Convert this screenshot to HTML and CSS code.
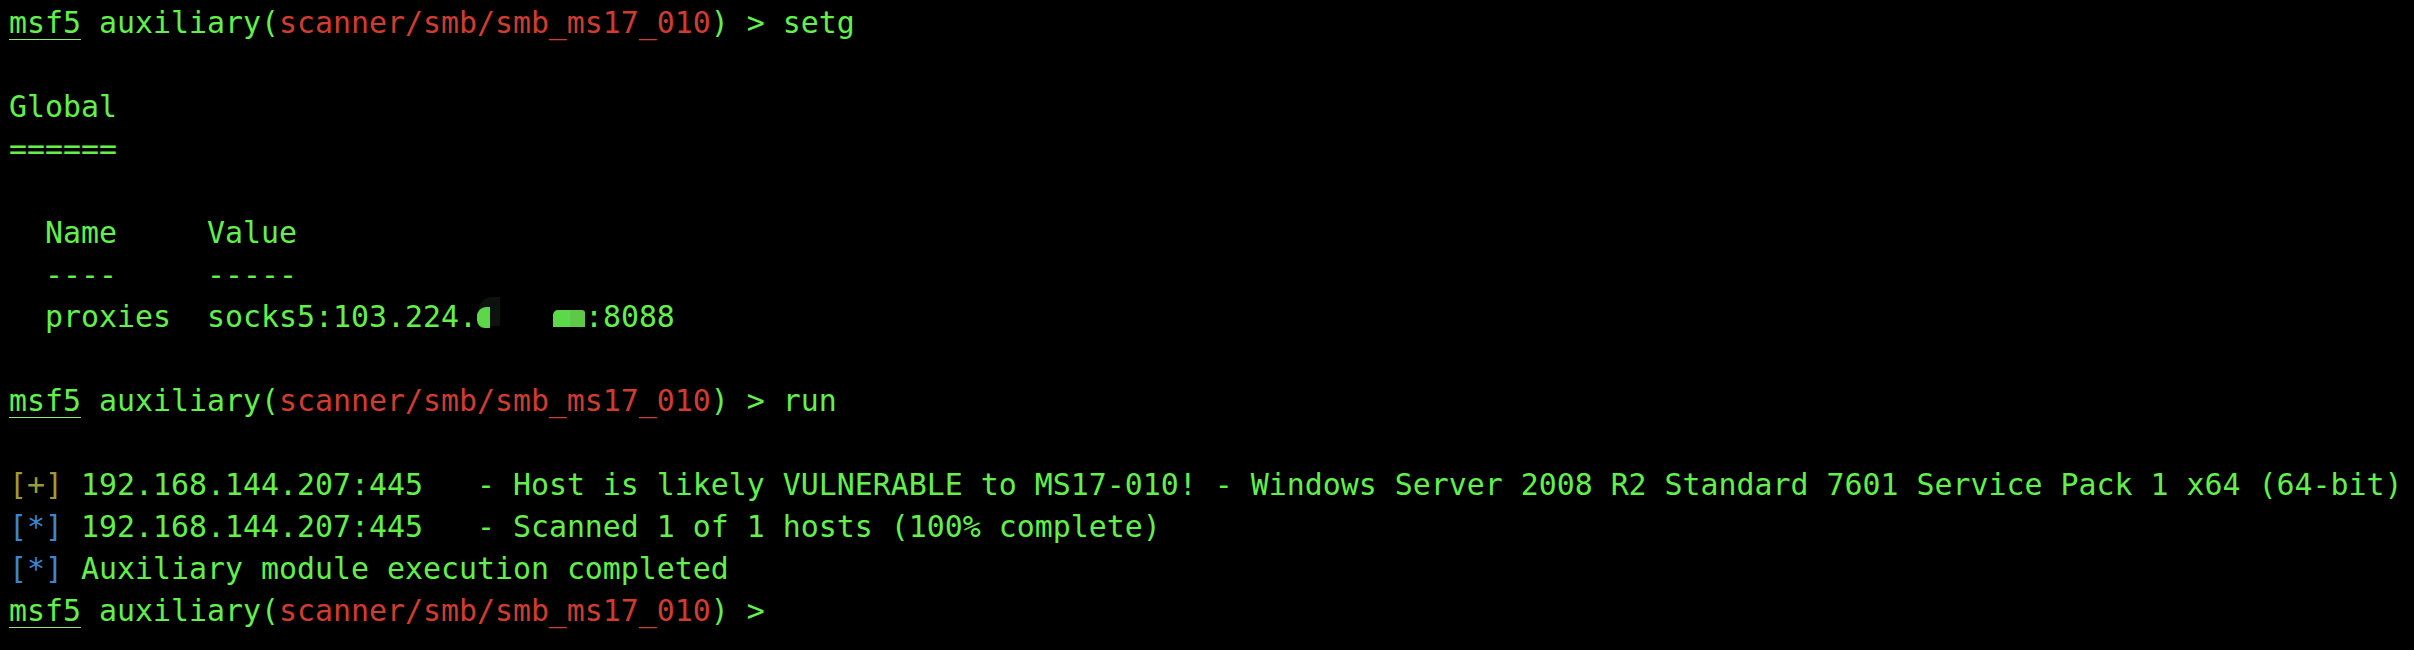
FILE: index.html
```html
<!DOCTYPE html>
<html>
<head>
<meta charset="utf-8">
<link rel="stylesheet" href="styles.css">
</head>
<body>
<div class="term">
  <div class="ln"><span class="u">msf5</span> auxiliary(<span class="r">scanner/smb/smb_ms17_010</span>) &gt; setg</div>
  <div class="ln"></div>
  <div class="ln">Global</div>
  <div class="ln">======</div>
  <div class="ln"></div>
  <div class="ln">  Name     Value</div>
  <div class="ln">  ----     -----</div>
  <div class="ln">  proxies  socks5:103.224.<span class="redact"><span class="blob"></span><span class="gap"></span><span class="bar"><span class="bar-a"></span><span class="bar-b"></span></span></span>:8088</div>
  <div class="ln"></div>
  <div class="ln"><span class="u">msf5</span> auxiliary(<span class="r">scanner/smb/smb_ms17_010</span>) &gt; run</div>
  <div class="ln"></div>
  <div class="ln"><span class="y">[+]</span> 192.168.144.207:445   - Host is likely VULNERABLE to MS17-010! - Windows Server 2008 R2 Standard 7601 Service Pack 1 x64 (64-bit)</div>
  <div class="ln"><span class="b">[*]</span> 192.168.144.207:445   - Scanned 1 of 1 hosts (100% complete)</div>
  <div class="ln"><span class="b">[*]</span> Auxiliary module execution completed</div>
  <div class="ln"><span class="u">msf5</span> auxiliary(<span class="r">scanner/smb/smb_ms17_010</span>) &gt; </div>
</div>
</body>
</html>
```

FILE: styles.css
```css
html, body {
  margin: 0;
  padding: 0;
  background: #000;
}

.term {
  padding: 2px 0 0 9px;
  font-family: "DejaVu Sans Mono", "Liberation Mono", monospace;
  font-size: 29.9px;
  line-height: 42px;
  color: #62f04b;
}

.ln {
  height: 42px;
  white-space: pre;
}

.u {
  text-decoration: underline;
  text-decoration-thickness: 1px;
  text-underline-offset: 6px;
  text-decoration-color: #8fe97c;
}

.r { color: #d13c31; }
.y { color: #9c9c34; }
.b { color: #3b85d4; }

.redact {
  display: inline-flex;
  align-items: flex-end;
  width: 108px;
  height: 42px;
  vertical-align: top;
  padding-bottom: 10px;
  box-sizing: border-box;
}

.blob {
  display: inline-block;
  width: 13px;
  height: 21px;
  background: #5ed64a;
  border-radius: 9px 0 0 8px;
  box-shadow: 6px -6px 0 4px #0c120c;
}

.gap {
  flex: 0 0 63px;
}

.bar {
  display: inline-flex;
  height: 17px;
  border-radius: 5px 3px 0 0;
  overflow: hidden;
  margin-bottom: 1px;
}

.bar-a {
  width: 17px;
  background: #5ed84b;
}

.bar-b {
  width: 15px;
  background: #5fc847;
}
```
